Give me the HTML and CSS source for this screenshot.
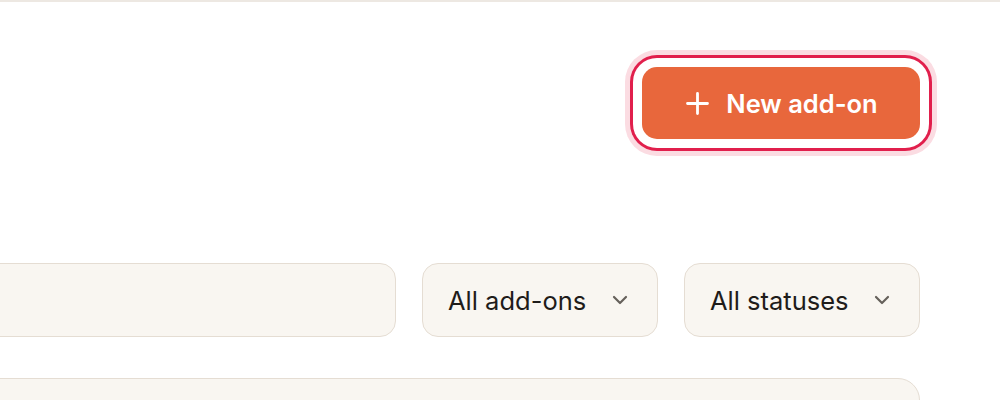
FILE: index.html
```html
<!DOCTYPE html>
<html lang="en">
<head>
<meta charset="utf-8">
<link rel="stylesheet" href="styles.css">
</head>
<body>
<div class="topline"></div>
<main class="page">
  <header class="header">
    <button class="btn-primary" type="button">
      <svg class="plus" width="23" height="23" viewBox="0 0 23 23" aria-hidden="true">
        <path d="M11.5 1.5V21.5M1.5 11.5H21.5" stroke="#fff" stroke-width="2.8" stroke-linecap="round"/>
      </svg>
      <span>New add-on</span>
    </button>
  </header>
  <div class="toolbar">
    <div class="search"></div>
    <div class="select">
      <span>All add-ons</span>
      <svg class="chev" width="16" height="10" viewBox="0 0 16 10" aria-hidden="true"><path d="M2 2l6 6 6-6" fill="none" stroke="#66615b" stroke-width="2.2" stroke-linecap="round" stroke-linejoin="round"/></svg>
    </div>
    <div class="select">
      <span>All statuses</span>
      <svg class="chev" width="16" height="10" viewBox="0 0 16 10" aria-hidden="true"><path d="M2 2l6 6 6-6" fill="none" stroke="#66615b" stroke-width="2.2" stroke-linecap="round" stroke-linejoin="round"/></svg>
    </div>
  </div>
  <div class="card"></div>
</main>
</body>
</html>
```

FILE: styles.css
```css
* { box-sizing: border-box; }
html, body {
  margin: 0;
  padding: 0;
  background: #ffffff;
  overflow: hidden;
  height: 400px;
}
body {
  font-family: Inter, "DejaVu Sans", sans-serif;
  color: #1f1c1a;
}
.topline {
  height: 2px;
  background: #ede8e2;
}
.page {
  margin-left: -60px;
  width: 980px;
  display: flex;
  flex-direction: column;
}
.header {
  display: flex;
  justify-content: flex-end;
  padding-top: 65px;
}
.btn-primary {
  width: 278px;
  height: 72px;
  flex: none;
  border: none;
  border-radius: 15px;
  background: #e8673c;
  color: #ffffff;
  font-family: Inter, "DejaVu Sans", sans-serif;
  font-size: 25.5px;
  font-weight: 600;
  display: flex;
  align-items: center;
  justify-content: center;
  gap: 17px;
  padding: 0 0 0 2px;
  box-shadow: 0 0 0 9px #ffffff, 0 0 0 12px #e11f4c, 0 0 0 17px #fbdce2;
}
.plus { display: block; }
.toolbar {
  display: flex;
  gap: 26px;
  margin-top: 124px;
  flex: none;
}
.search, .select {
  height: 74px;
  background: #f9f6f1;
  border: 1.5px solid #e5ddd3;
  border-radius: 16px;
}
.search { flex: 1; }
.select {
  width: 236px;
  flex: none;
  display: flex;
  align-items: center;
  justify-content: space-between;
  padding: 0 29px 0 25px;
  font-size: 25.5px;
}
.chev { display: block; }
.card {
  margin-top: 41px;
  height: 120px;
  flex: none;
  background: #f9f6f1;
  border: 1.5px solid #e5ddd3;
  border-radius: 22px;
}
```
